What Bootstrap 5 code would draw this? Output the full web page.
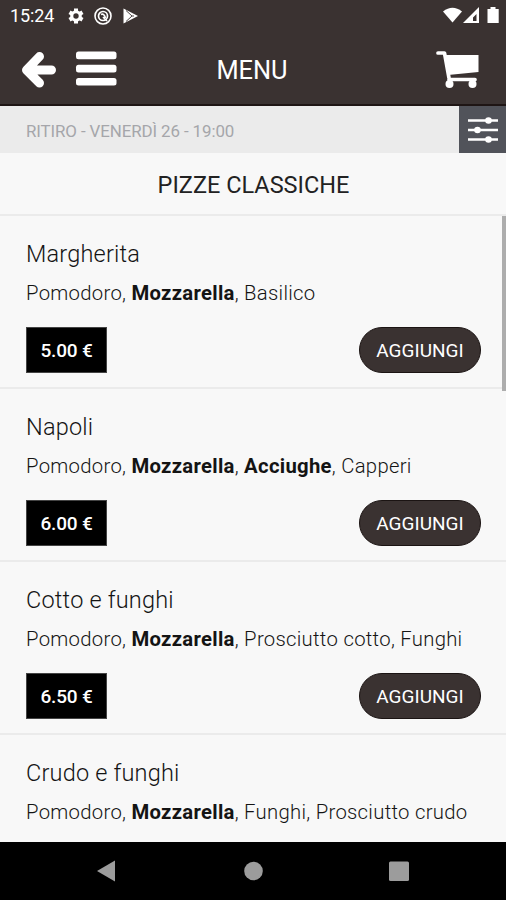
<!DOCTYPE html>
<html lang="it">
<head>
<meta charset="utf-8">
<meta name="viewport" content="width=device-width, initial-scale=1">
<title>Menu</title>
<link href="https://cdn.jsdelivr.net/npm/bootstrap@5.3.0/dist/css/bootstrap.min.css" rel="stylesheet">
<style>
body{font-family:Roboto,"Liberation Sans",sans-serif;color:#141414;background:#f8f8f8;line-height:1;white-space:nowrap}
svg{display:block;flex:none}
.screen{width:506px;height:900px}
.top{height:106px;background:#3a3231;border-bottom:2px solid #1e1514}
.status{height:32px;padding-left:10px;padding-right:6px}
.clock{font-size:18px;letter-spacing:-.1px;width:57px}
.appbar{height:72px;padding:2px 26px 0 21px}
.appbar>div{width:100px}
.heading{font-size:25.4px;padding:3px 0 0 3px}
.pickup{height:47px;background:#ebebeb}
.pickup-text{font-size:16.9px;font-weight:400;color:#a5a6aa;padding:3px 0 0 26px;letter-spacing:-.1px}
.filter{width:47px;height:47px;background:#51535a;padding:0 0 0 9px}
.category{height:63px;font-size:23.5px;color:#222;border-bottom:2px solid #ebebeb;padding:3px 0 0 1px}
.dishes{height:626px}
.dish{height:173px;padding:25px 25px 0 26px;border-bottom:2px solid #ebebeb}
.dish-name{font-size:23.5px;font-weight:300;line-height:26px;letter-spacing:.2px}
.dish-info{font-size:20.3px;font-weight:300;line-height:24px;margin-top:14px;letter-spacing:.29px}
.dish-info b{font-weight:700}
.price{width:81px;height:46px;background:#000;color:#fff;font-size:19px;font-weight:500;border:1px solid #444;letter-spacing:-.2px}
.add{width:122px;height:46px;background:#3a3231;color:#fff;font-size:19px;border:1px solid #1b1413;padding:2px 0 0}
.actions{margin-top:22px}
.thumb{right:0;top:-1px;width:4px;height:176px;background:#adadad}
.sysnav{height:58px;background:#000}
</style>
</head>
<body>
<main class="screen d-flex flex-column overflow-hidden">
<header class="top flex-shrink-0 text-white">
  <div class="status d-flex align-items-center">
    <span class="clock">15:24</span>
    <svg width="80" height="20" viewBox="0 0 80 20">
      <g fill="#fff"><circle cx="9" cy="10" r="5.800"/><g stroke="#fff" stroke-width="4"><path d="M9 2.500v15M2.500 6.250l13 7.500M2.500 13.750l13-7.500"/></g></g><circle cx="9" cy="10" r="2.700" fill="#3a3231"/>
      <g fill="none" stroke="#fff"><circle cx="36" cy="10" r="8" stroke-width="1.600"/><circle cx="36" cy="10" r="4.500" stroke-width="1.700"/><path d="M34 8.500q3-1.500 4.500 3.500M36 11l4 4" stroke-width="1.700"/></g>
      <path d="M56.500 2.500L71 10l-14.500 7.500z" fill="#fff"/><path d="M59 4.500l6 5.500-6 5.500M65 10h2" fill="none" stroke="#3a3231" stroke-width=".9"/>
    </svg>
    <svg class="ms-auto" width="58" height="22" viewBox="0 0 58 22">
      <path d="M1 6.500Q10.500 -1 20 6.500L10.500 17.500z" fill="#fff"/>
      <path fill-rule="evenodd" d="M37 2v16H21zM34.500 9v7H31v-3.500z" fill="#fff"/>
      <path d="M48.500 2h5v2h3.200v14H45.500V4h3z" fill="#fff"/>
    </svg>
  </div>
  <div class="appbar d-flex align-items-center justify-content-between">
    <div>
      <svg width="98" height="40" viewBox="0 0 98 40" fill="none" stroke="#fff">
        <path d="M18.500 7.500L5.500 21l13 13M7 21h23.500" stroke-width="9" stroke-linecap="round" stroke-linejoin="round"/>
        <g fill="#fff" stroke="none"><rect x="55" y="2.500" width="40.500" height="7.700" rx="2.500"/><rect x="55" y="15.700" width="40.500" height="7.700" rx="2.500"/><rect x="55" y="28.900" width="40.500" height="7.700" rx="2.500"/></g>
      </svg>
    </div>
    <h1 class="heading m-0 fw-normal text-center">MENU</h1>
    <div class="d-flex justify-content-end">
      <svg width="46" height="40" viewBox="0 0 46 40">
        <path d="M11 6h33.500v17L14 26z" fill="#fff"/>
        <path d="M4 4h6.500l4.500 25M15 30.500h26" fill="none" stroke="#fff" stroke-width="3.700" stroke-linecap="round" stroke-linejoin="round"/>
        <circle cx="15.500" cy="35" r="4" fill="#fff"/><circle cx="38.500" cy="35" r="4" fill="#fff"/>
      </svg>
    </div>
  </div>
</header>
<div class="pickup flex-shrink-0 d-flex align-items-center justify-content-between">
  <span class="pickup-text">RITIRO - VENERDÌ 26 - 19:00</span>
  <div class="filter d-flex align-items-center">
    <svg width="30" height="28" viewBox="0 0 30 28" fill="#fff"><path d="M0 4.500h30M0 14h30M0 23.500h30" stroke="#fff" stroke-width="2.400"/><circle cx="20.500" cy="4.500" r="3.300"/><circle cx="9.500" cy="14" r="3.300"/><circle cx="20.500" cy="23.500" r="3.300"/></svg>
  </div>
</div>
<h2 class="category flex-shrink-0 d-flex align-items-center justify-content-center m-0 fw-normal">PIZZE CLASSICHE</h2>
<section class="dishes position-relative overflow-hidden">
  <article class="dish"><div class="dish-name">Margherita</div><div class="dish-info">Pomodoro, <b>Mozzarella</b>, Basilico</div>
    <div class="actions d-flex justify-content-between"><span class="price d-flex align-items-center justify-content-center">5.00 €</span><button class="add btn rounded-pill">AGGIUNGI</button></div></article>
  <article class="dish"><div class="dish-name">Napoli</div><div class="dish-info">Pomodoro, <b>Mozzarella</b>, <b>Acciughe</b>, Capperi</div>
    <div class="actions d-flex justify-content-between"><span class="price d-flex align-items-center justify-content-center">6.00 €</span><button class="add btn rounded-pill">AGGIUNGI</button></div></article>
  <article class="dish"><div class="dish-name">Cotto e funghi</div><div class="dish-info">Pomodoro, <b>Mozzarella</b>, Prosciutto cotto, Funghi</div>
    <div class="actions d-flex justify-content-between"><span class="price d-flex align-items-center justify-content-center">6.50 €</span><button class="add btn rounded-pill">AGGIUNGI</button></div></article>
  <article class="dish"><div class="dish-name">Crudo e funghi</div><div class="dish-info">Pomodoro, <b>Mozzarella</b>, Funghi, Prosciutto crudo</div></article>
  <div class="thumb position-absolute"></div>
</section>
<nav class="sysnav flex-shrink-0">
  <svg width="506" height="58" viewBox="0 0 506 58" fill="#9c9c9c"><path d="M97 29l18-10.500v21z"/><circle cx="253.500" cy="29" r="9.300"/><rect x="389" y="19.500" width="20" height="19.500" rx="1.500"/></svg>
</nav>
</main>
<script src="https://cdn.jsdelivr.net/npm/bootstrap@5.3.0/dist/js/bootstrap.bundle.min.js"></script>
</body>
</html>
